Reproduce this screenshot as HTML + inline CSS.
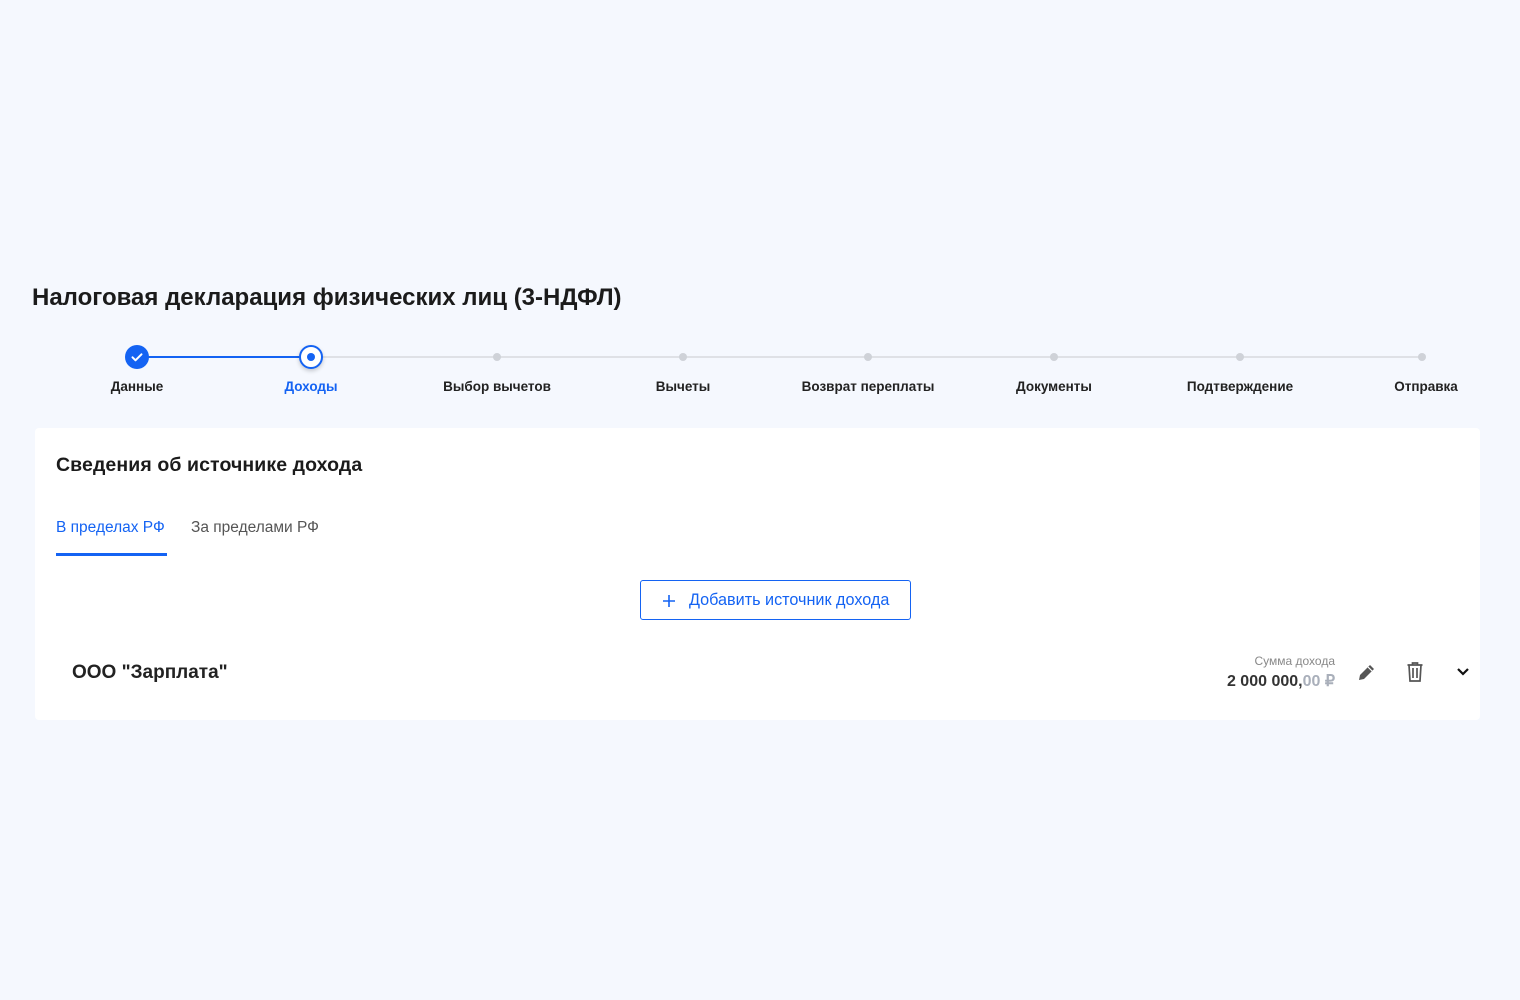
<!DOCTYPE html>
<html><head><meta charset="utf-8"><style>
*{margin:0;padding:0;box-sizing:border-box}
body{width:1520px;height:1000px;background:#f5f8fe;font-family:"Liberation Sans",Arial,sans-serif;position:relative;overflow:hidden;color:#1a1a1a}
.abs{position:absolute;white-space:nowrap}
h1{position:absolute;left:32px;top:284px;font-size:24px;font-weight:bold;letter-spacing:0px;color:#1b1b1b}
.line{position:absolute;height:2px;top:356px}
.dot{position:absolute;width:8px;height:8px;border-radius:50%;background:#cfd2d8;top:353px}
.lbl{position:absolute;top:379px;font-size:13.5px;font-weight:bold;transform:translateX(-50%);white-space:nowrap;color:#222}
.card{position:absolute;left:35px;top:428px;width:1445px;height:292px;background:#fff;border-radius:4px}
</style></head><body>
<h1>Налоговая декларация физических лиц (3-НДФЛ)</h1>
<div class="line" style="left:137px;width:174px;background:#1463f3"></div>
<div class="line" style="left:311px;width:1111px;background:#dfe1e6"></div>
<div class="abs" style="left:125px;top:345px;width:24px;height:24px;border-radius:50%;background:#1463f3">
<svg width="24" height="24" viewBox="0 0 24 24"><path d="M7.5 12.3l3 3 6-6" stroke="#fff" stroke-width="2" fill="none" stroke-linecap="round" stroke-linejoin="round"/></svg></div>
<div class="abs" style="left:299px;top:345px;width:24px;height:24px;border-radius:50%;background:#fff;border:2.5px solid #1463f3;box-shadow:0 2px 4px rgba(0,0,0,.2)"><div style="position:absolute;left:5.5px;top:5.5px;width:8px;height:8px;border-radius:50%;background:#1463f3"></div></div>
<div class="dot" style="left:493px"></div><div class="dot" style="left:679px"></div><div class="dot" style="left:864px"></div><div class="dot" style="left:1050px"></div><div class="dot" style="left:1236px"></div><div class="dot" style="left:1418px"></div>
<div class="lbl" style="left:137px">Данные</div>
<div class="lbl" style="left:311px;color:#1463f3">Доходы</div>
<div class="lbl" style="left:497px">Выбор вычетов</div>
<div class="lbl" style="left:683px">Вычеты</div>
<div class="lbl" style="left:868px">Возврат переплаты</div>
<div class="lbl" style="left:1054px">Документы</div>
<div class="lbl" style="left:1240px">Подтверждение</div>
<div class="lbl" style="left:1426px">Отправка</div>
<div class="card"></div>
<div class="abs" style="left:56px;top:454px;font-size:19.5px;font-weight:bold;letter-spacing:0.1px;color:#1b1b1b">Сведения об источнике дохода</div>
<div class="abs" style="left:56px;top:519px;font-size:15.5px;color:#1463f3">В пределах РФ</div>
<div class="abs" style="left:56px;top:553px;width:111px;height:3px;background:#1463f3"></div>
<div class="abs" style="left:191px;top:519px;font-size:15.5px;color:#555">За пределами РФ</div>
<div class="abs" style="left:640px;top:580px;width:271px;height:40px;border:1px solid #1463f3;border-radius:3px;color:#1463f3;font-size:16.2px;line-height:39px;padding-left:48px">Добавить источник дохода
<svg style="position:absolute;left:21px;top:13px" width="14" height="14" viewBox="0 0 14 14"><path d="M7 1v12M1 7h12" stroke="#1463f3" stroke-width="1.6"/></svg></div>
<div class="abs" style="left:72px;top:662px;font-size:19px;font-weight:bold;color:#222">ООО "Зарплата"</div>
<div class="abs" style="right:185px;top:654px;font-size:12px;color:#888">Сумма дохода</div>
<div class="abs" style="right:185px;top:671px;font-size:16px;font-weight:bold;color:#333">2 000 000,<span style="color:#a9afba">00 ₽</span></div>
<svg class="abs" style="left:1357px;top:662px" width="20" height="20" viewBox="0 0 20 20"><path d="M2 18l1-5 10-10 4 4-10 10z" fill="#555"/><path d="M11 5l4 4" stroke="#fff" stroke-width="1.2"/></svg>
<svg class="abs" style="left:1406px;top:661px" width="18" height="22" viewBox="0 0 18 22"><path d="M1.5 4h15M6.5 4V2h5v2M3 4l1 16h10l1-16M7 7v10M11 7v10" stroke="#555" stroke-width="1.7" fill="none"/></svg>
<svg class="abs" style="left:1456px;top:667px" width="14" height="10" viewBox="0 0 14 10"><path d="M2 2l5 5 5-5" stroke="#111" stroke-width="2.2" fill="none"/></svg>
</body></html>
